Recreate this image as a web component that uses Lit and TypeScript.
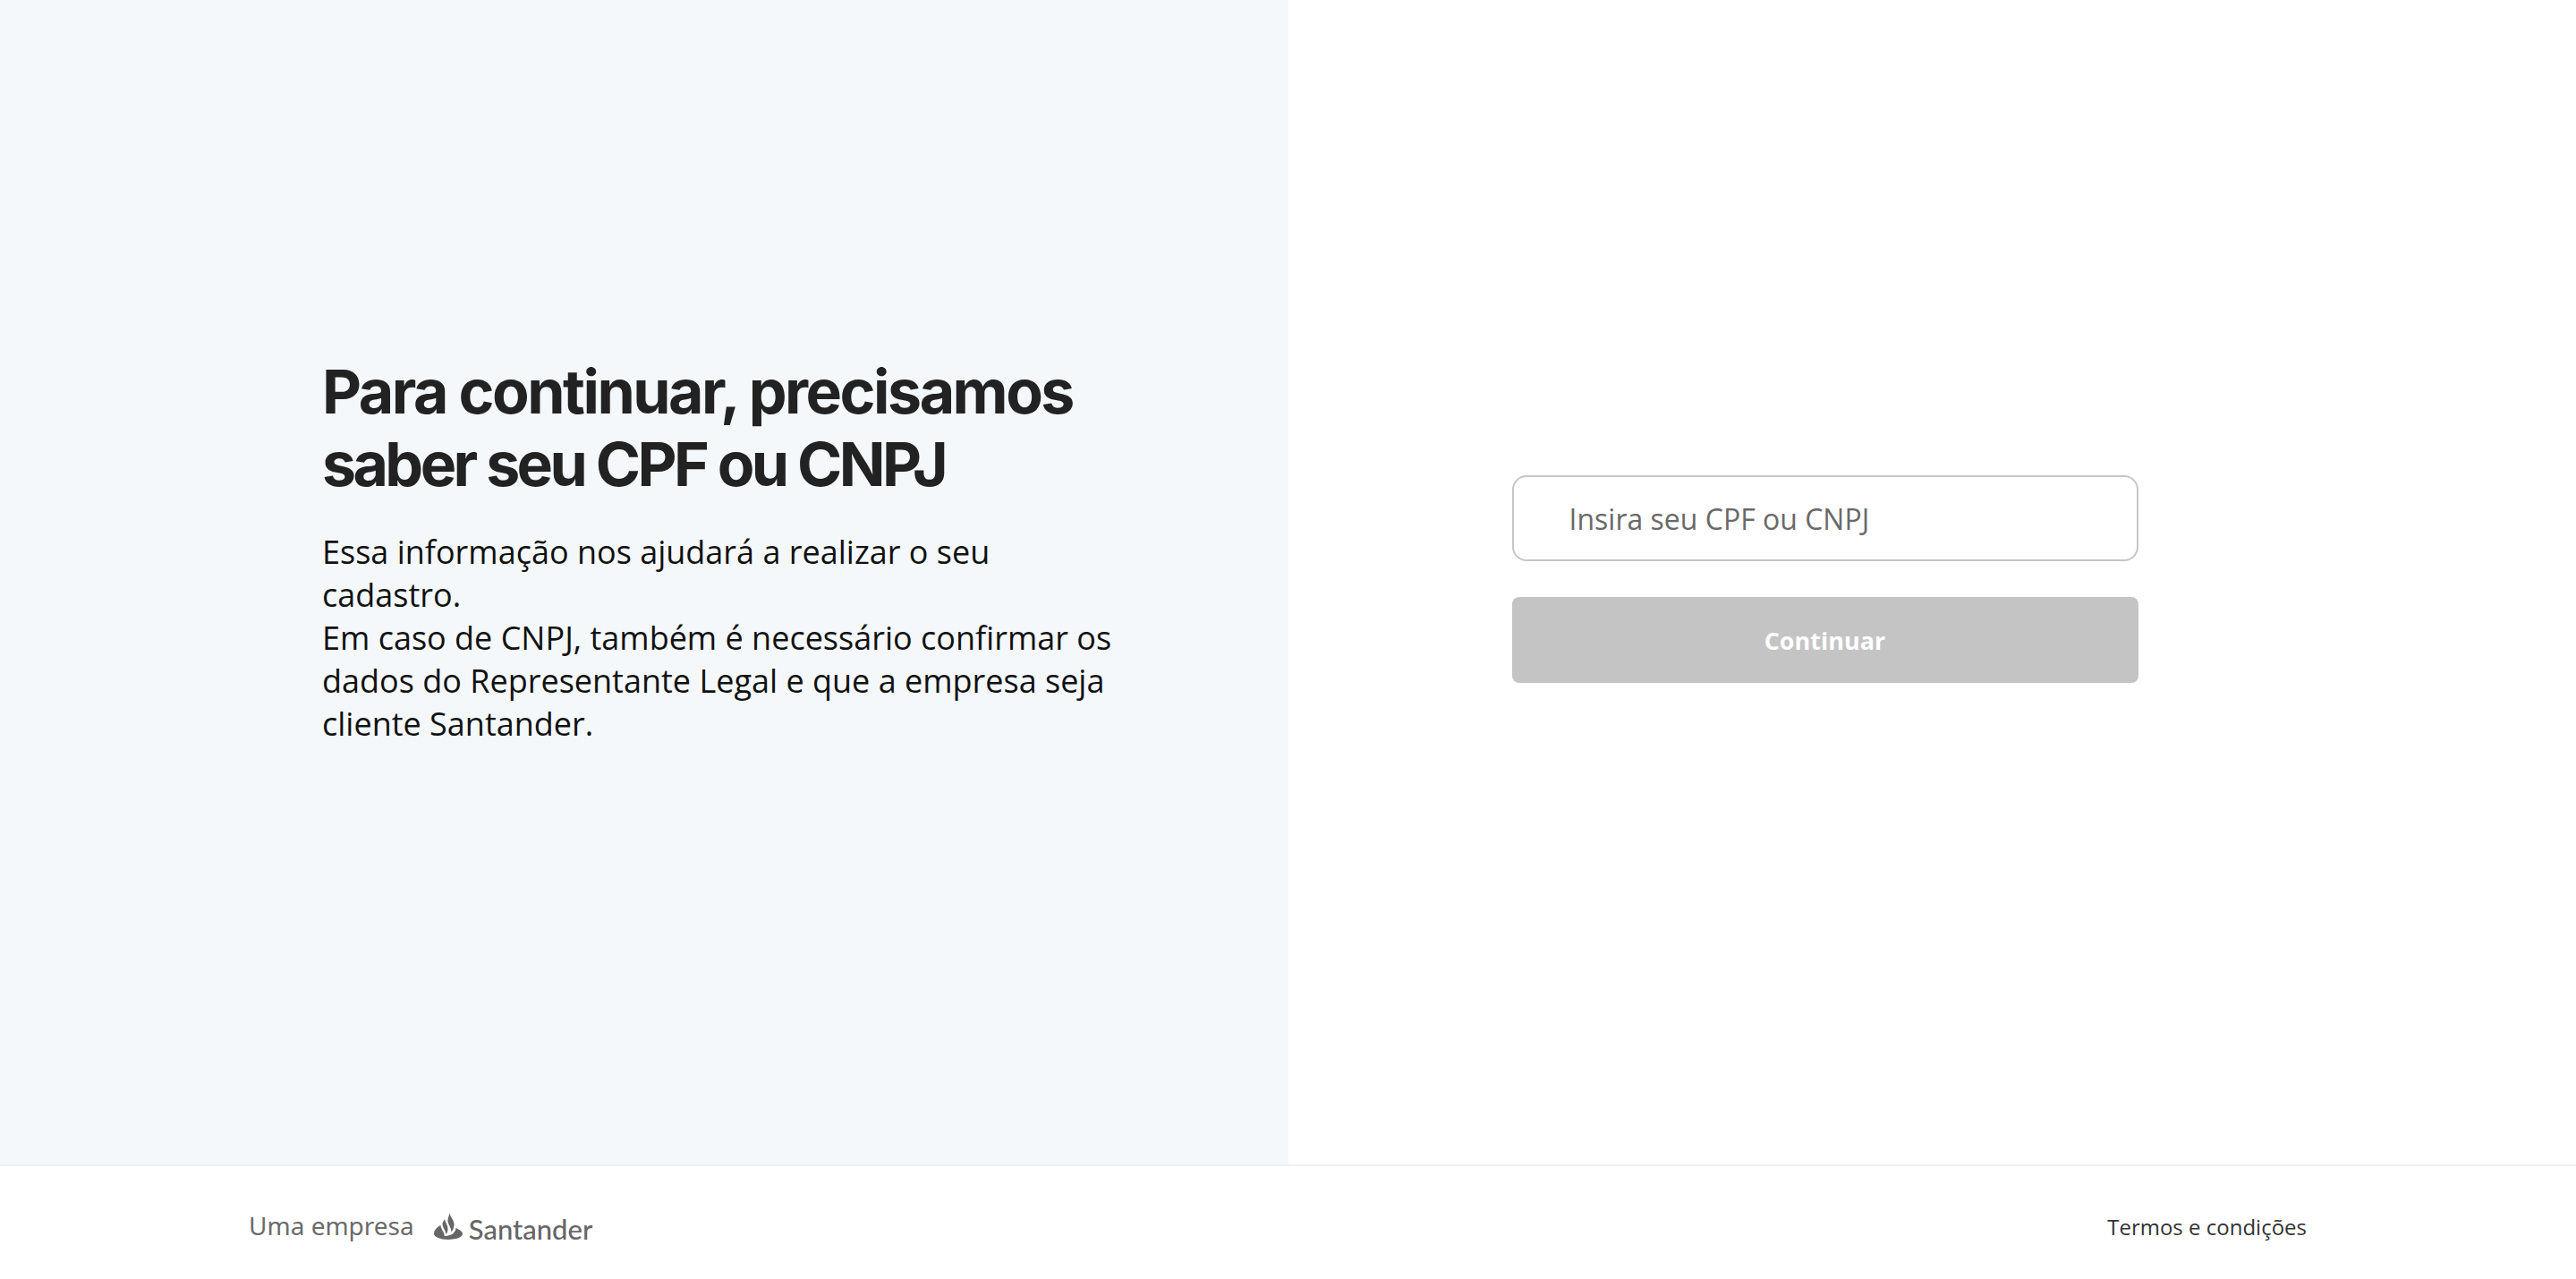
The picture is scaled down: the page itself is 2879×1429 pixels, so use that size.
import { LitElement, html, css } from "lit";
import { customElement } from "lit/decorators.js";

@customElement("app-root")
export class AppRoot extends LitElement {
  static styles = css`
    :host { display: block; width: 100%; height: 100vh; background: #fff; font-family: "Open Sans", sans-serif; }
    .page { display: flex; flex-direction: column; height: 1429px; overflow: hidden; }
    .main { display: flex; height: 1301px; flex: none; }
    .left { width: 1440px; flex: none; background: #f4f8fb; display: flex; flex-direction: column; justify-content: center; padding: 0 180px 70px 360px; box-sizing: border-box; }
    h1 { margin: -2px 0 34px; font-family: Inter, sans-serif; font-weight: 700; font-size: 68px; line-height: 81px; letter-spacing: -2.5px; color: #222; white-space: nowrap; }
    .tight { letter-spacing: -3.6px; }
    p { margin: 0; font-size: 36px; line-height: 48px; color: #111; width: 900px; }
    .right { flex: 1; display: flex; flex-direction: column; align-items: center; justify-content: center; gap: 40px; padding: 0 240px 7px 0; }
    .input { width: 700px; height: 96px; box-sizing: border-box; border: 2px solid #c6c6c6; border-radius: 16px; display: flex; align-items: center; padding: 0 62px; font-size: 32px; color: #696969; }
    .btn { width: 700px; height: 96px; border-radius: 8px; background: #c4c4c4; color: #fff; display: flex; align-items: center; justify-content: center; font-size: 27px; font-weight: 700; }
    footer { flex: 1; border-top: 2px solid #eef0f3; display: flex; align-items: center; justify-content: space-between; padding: 8px 301px 0 278px; }
    .brand { display: flex; align-items: center; gap: 22px; color: #6b6b6b; }
    .uma { font-family: "Noto Sans", sans-serif; font-size: 28px; margin-top: -2px; }
    .logo { display: flex; align-items: center; gap: 7px; }
    .logo svg { display: block; }
    .sant { font-family: Lato, sans-serif; font-size: 31px; font-weight: 500; line-height: 1; color: #666; margin-top: 6px; }
    .terms { font-size: 24px; color: #333; }
  `;

  render() {
    return html`<div class="page">
      <div class="main">
        <section class="left">
          <h1>Para continuar, precisamos<br /><span class="tight">saber seu CPF ou CNPJ</span></h1>
          <p>Essa informação nos ajudará a realizar o seu<br />cadastro.<br />Em caso de CNPJ, também é necessário confirmar os<br />dados do Representante Legal e que a empresa seja<br />cliente Santander.</p>
        </section>
        <section class="right">
          <div class="input">Insira seu CPF ou CNPJ</div>
          <div class="btn">Continuar</div>
        </section>
      </div>
      <footer>
        <div class="brand">
          <span class="uma">Uma empresa</span>
          <div class="logo">
            <svg width="32" height="30" viewBox="0 0 32 30" fill="#666">
              <path d="M17.500 0C18 5 23 8 22.500 14C22.300 17 21 20 19.500 21.500C19.500 17 15.500 13 15.500 9C15.500 5.500 17 3.500 17.500 0Z"/>
              <path d="M12 7C12.500 11 16 14 15.500 19C15.300 21 14.500 23 13.500 24.500C13.500 20 9.500 17 9.500 12.500C9.500 10.500 11 9 12 7Z"/>
              <path d="M7.500 14C7.500 18 11.500 21 11.800 26C17 26 24 24 24.500 17C27.500 18.500 32 20.500 32 23.500C32 27 25 30 16 30C7 30 0 27 0 23.500C0 19.500 3.500 16 7.500 14Z"/>
            </svg>
            <span class="sant">Santander</span>
          </div>
        </div>
        <span class="terms">Termos e condições</span>
      </footer>
    </div>`;
  }
}
